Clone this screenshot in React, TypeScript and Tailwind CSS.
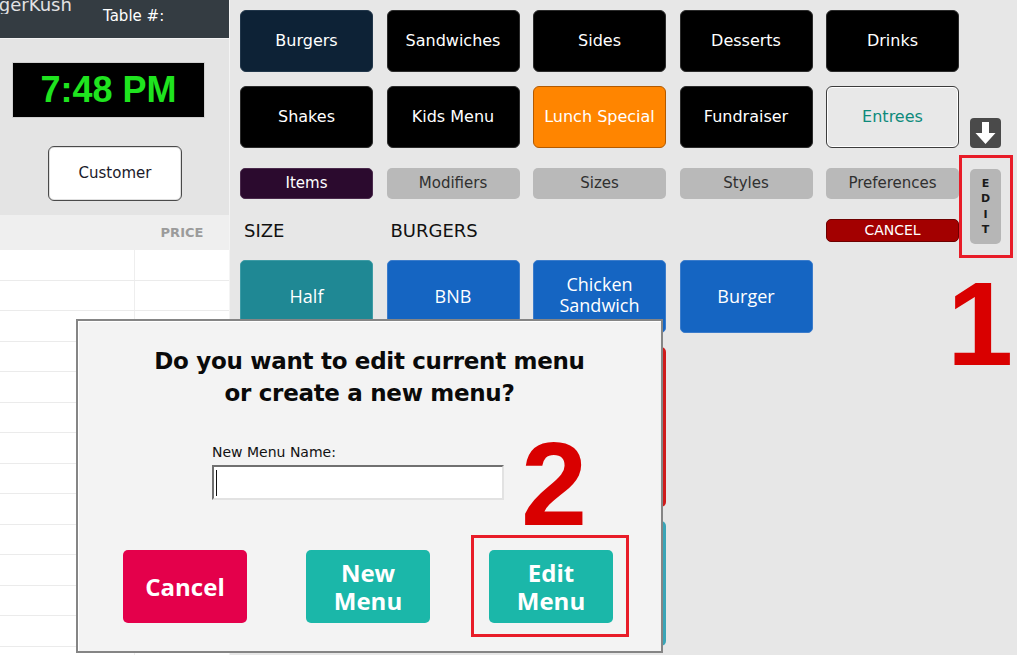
import React from 'react';

const dv = "font-['DejaVu_Sans',sans-serif]";
const os = "font-['Open_Sans',sans-serif]";

type Tile = { label: string; cls: string };

const categories: Tile[] = [
  { label: 'Burgers', cls: 'bg-[#0d2236] border-[#21364a] text-white' },
  { label: 'Sandwiches', cls: 'bg-black border-[#2b2b2b] text-white' },
  { label: 'Sides', cls: 'bg-black border-[#2b2b2b] text-white' },
  { label: 'Desserts', cls: 'bg-black border-[#2b2b2b] text-white' },
  { label: 'Drinks', cls: 'bg-black border-[#2b2b2b] text-white' },
  { label: 'Shakes', cls: 'bg-black border-[#2b2b2b] text-white' },
  { label: 'Kids Menu', cls: 'bg-black border-[#2b2b2b] text-white' },
  { label: 'Lunch Special', cls: 'bg-[#ff8500] border-[#b35a00] text-white' },
  { label: 'Fundraiser', cls: 'bg-black border-[#2b2b2b] text-white' },
  { label: 'Entrees', cls: 'bg-[#e8e8e8] border-[#3c3c3c] text-[#0e8a7b] shadow-[inset_0_0_0_1px_#fff]' },
];

const tabs = ['Items', 'Modifiers', 'Sizes', 'Styles', 'Preferences'];

function OrderPanel() {
  return (
    <aside className="w-[230px] shrink-0 flex flex-col bg-[#e4e4e4] border-r border-[#f4f4f4] overflow-hidden">
      <div className="h-[38px] shrink-0 bg-[#343c42] flex items-start overflow-hidden">
        <div className={`w-[103px] overflow-hidden ${dv} text-[18px] leading-none text-[#e2e2e2]`}>
          <div className="ml-[-32px] mt-[-4px] whitespace-nowrap">BurgerKush</div>
        </div>
        <div className={`${dv} text-[15px] leading-none text-white pt-[9px]`}>Table #:</div>
      </div>
      <div className="h-px shrink-0 bg-[#f2f2f2]" />
      <div className="shrink-0 ml-[12px] mt-[23px] w-[193px] h-[56px] bg-black border border-[#d0d0d0] flex items-center justify-center">
        <span className="font-['Liberation_Sans',sans-serif] font-bold text-[36px] leading-none text-[#1fe41f]">7:48 PM</span>
      </div>
      <button className={`shrink-0 ml-[48px] mt-[28px] w-[134px] h-[55px] rounded-[6px] bg-white border border-[#4a4a4a] shadow-[inset_0_0_0_1px_#e0e0e0] ${dv} text-[15px] text-[#1a1a2a]`}>
        Customer
      </button>
      <div className="mt-[14px] flex-1 flex flex-col bg-white">
        <div className="h-[35px] shrink-0 bg-[#efefef] flex">
          <div className="w-[135px]" />
          <div className={`flex-1 flex items-center justify-center ${dv} font-bold text-[13px] text-[#9b9b9b]`}>PRICE</div>
        </div>
        {Array.from({ length: 14 }).map((_, i) => (
          <div key={i} className="h-[30.5px] shrink-0 flex border-b border-[#ebebeb]">
            <div className="w-[135px] border-r border-[#eeeeee]" />
            <div className="flex-1" />
          </div>
        ))}
      </div>
    </aside>
  );
}

function MenuBoard() {
  return (
    <main className="flex-1 flex pl-[10px] pt-[10px]">
      <div className="w-[719px] flex flex-col">
        <div className="grid grid-cols-[repeat(5,133px)] gap-x-[13.5px] gap-y-[14px]">
          {categories.map((c) => (
            <button
              key={c.label}
              className={`h-[62px] rounded-[6px] border ${c.cls} ${dv} text-[16px] flex items-center justify-center`}
            >
              {c.label}
            </button>
          ))}
        </div>

        <div className="mt-[20px] grid grid-cols-[repeat(5,133px)] gap-x-[13.5px]">
          {tabs.map((t, i) => (
            <button
              key={t}
              className={`h-[31px] rounded-[5px] ${dv} text-[15px] flex items-center justify-center ${
                i === 0 ? 'bg-[#2b0a2e] border border-[#4a2a4c] text-white' : 'bg-[#b9b9b9] text-[#303030]'
              }`}
            >
              {t}
            </button>
          ))}
        </div>

        <div className={`mt-[18px] h-[23px] grid grid-cols-[repeat(5,133px)] gap-x-[13.5px] items-center ${dv} text-[18px] text-[#111]`}>
          <span className="pl-[4px]">SIZE</span>
          <span className="pl-[4px]">BURGERS</span>
          <span />
          <span />
          <button className="h-[23px] rounded-[5px] bg-[#a30000] border border-[#6e0000] text-white text-[14px] flex items-center justify-center">
            CANCEL
          </button>
        </div>

        <div className={`mt-[20px] grid grid-cols-[repeat(5,133px)] gap-x-[13.5px] gap-y-[14px] ${os} font-medium text-[18px] text-white`}>
          <button className="h-[73px] rounded-[5px] bg-[#1f8894] border border-[#3d9ba5] flex items-center justify-center">Half</button>
          <button className="h-[73px] rounded-[5px] bg-[#1565c2] border border-[#3b7ccb] flex items-center justify-center">BNB</button>
          <button className="h-[73px] rounded-[5px] bg-[#1565c2] border border-[#3b7ccb] flex items-center justify-center leading-[21px] pb-[4px]">
            Chicken<br />Sandwich
          </button>
          <button className="h-[73px] rounded-[5px] bg-[#1565c2] border border-[#3b7ccb] flex items-center justify-center">Burger</button>
          <div className="col-start-3 row-start-2 h-[160px] rounded-[5px] bg-[#cf1b1b]" />
          <div className="col-start-3 row-start-3 h-[125px] rounded-[5px] bg-[#3aa5b7]" />
        </div>
      </div>

      <div className="ml-[11px] w-[32px] flex flex-col">
        <button className="mt-[108px] w-[31px] h-[30px] rounded-[4px] bg-[#4a4a4a] flex items-center justify-center">
          <svg width="31" height="30" viewBox="0 0 31 30">
            <path d="M12 4h7v11h6.5L15.5 26 5.5 15H12z" fill="#fff" />
          </svg>
        </button>
        <button className={`mt-[21px] w-[31px] h-[75px] rounded-[5px] bg-[#b6b6b6] flex flex-col items-center justify-center ${dv} font-bold text-[11px] leading-[15.5px] text-[#1a1a1a]`}>
          <span>E</span>
          <span>D</span>
          <span>I</span>
          <span>T</span>
        </button>
      </div>
    </main>
  );
}

function MenuDialog() {
  return (
    <div className="absolute left-[76px] top-[319px] w-[587px] h-[334px] border-2 border-[#858585] bg-[#f3f3f3] shadow-[inset_1px_1px_0_#fff] flex flex-col">
      <h2 className={`pt-[24px] text-center ${dv} font-bold text-[23px] tracking-[-0.3px] leading-[32px] text-[#0a0a0a]`}>
        Do you want to edit current menu
        <br />
        or create a new menu?
      </h2>
      <label className={`ml-[134px] mt-[35px] ${dv} text-[14px] leading-[17px] text-[#111]`}>New Menu Name:</label>
      <div className="ml-[134px] mt-[4px] w-[292px] h-[35px] bg-white border-2 border-t-[#707070] border-l-[#707070] border-b-[#e2e2e2] border-r-[#e2e2e2] flex items-center pl-[2px]">
        <span className="w-px h-[26px] bg-[#111]" />
      </div>
      <div className={`mt-[50px] pl-[45px] flex gap-[59px] ${os} font-bold text-[24px] text-white`}>
        <button className="w-[124px] h-[73px] rounded-[5px] bg-[#e4004b] flex items-center justify-center">Cancel</button>
        <button className="w-[124px] h-[73px] rounded-[5px] bg-[#1bb7a9] flex flex-col items-center justify-center leading-[28px]">
          <span>New</span>
          <span>Menu</span>
        </button>
        <button className="w-[124px] h-[73px] rounded-[5px] bg-[#1bb7a9] flex flex-col items-center justify-center leading-[28px]">
          <span>Edit</span>
          <span>Menu</span>
        </button>
      </div>
    </div>
  );
}

export default function App() {
  return (
    <div className="relative w-[1017px] h-[655px] overflow-hidden bg-[#e7e7e7] flex">
      <OrderPanel />
      <MenuBoard />
      <MenuDialog />

      {/* step callouts */}
      <div className="absolute left-[959px] top-[155px] w-[54px] h-[103px] border-[3px] border-[#e81c28]" />
      <div className="absolute left-[947px] top-[264px] font-['Liberation_Sans',sans-serif] font-bold text-[119px] leading-none text-[#d90000]">1</div>
      <div className="absolute left-[471px] top-[535px] w-[158px] h-[102px] border-[3px] border-[#e81c28]" />
      <div className="absolute left-[521px] top-[424px] font-['Liberation_Sans',sans-serif] font-bold text-[119px] leading-none text-[#d90000]">2</div>
    </div>
  );
}
